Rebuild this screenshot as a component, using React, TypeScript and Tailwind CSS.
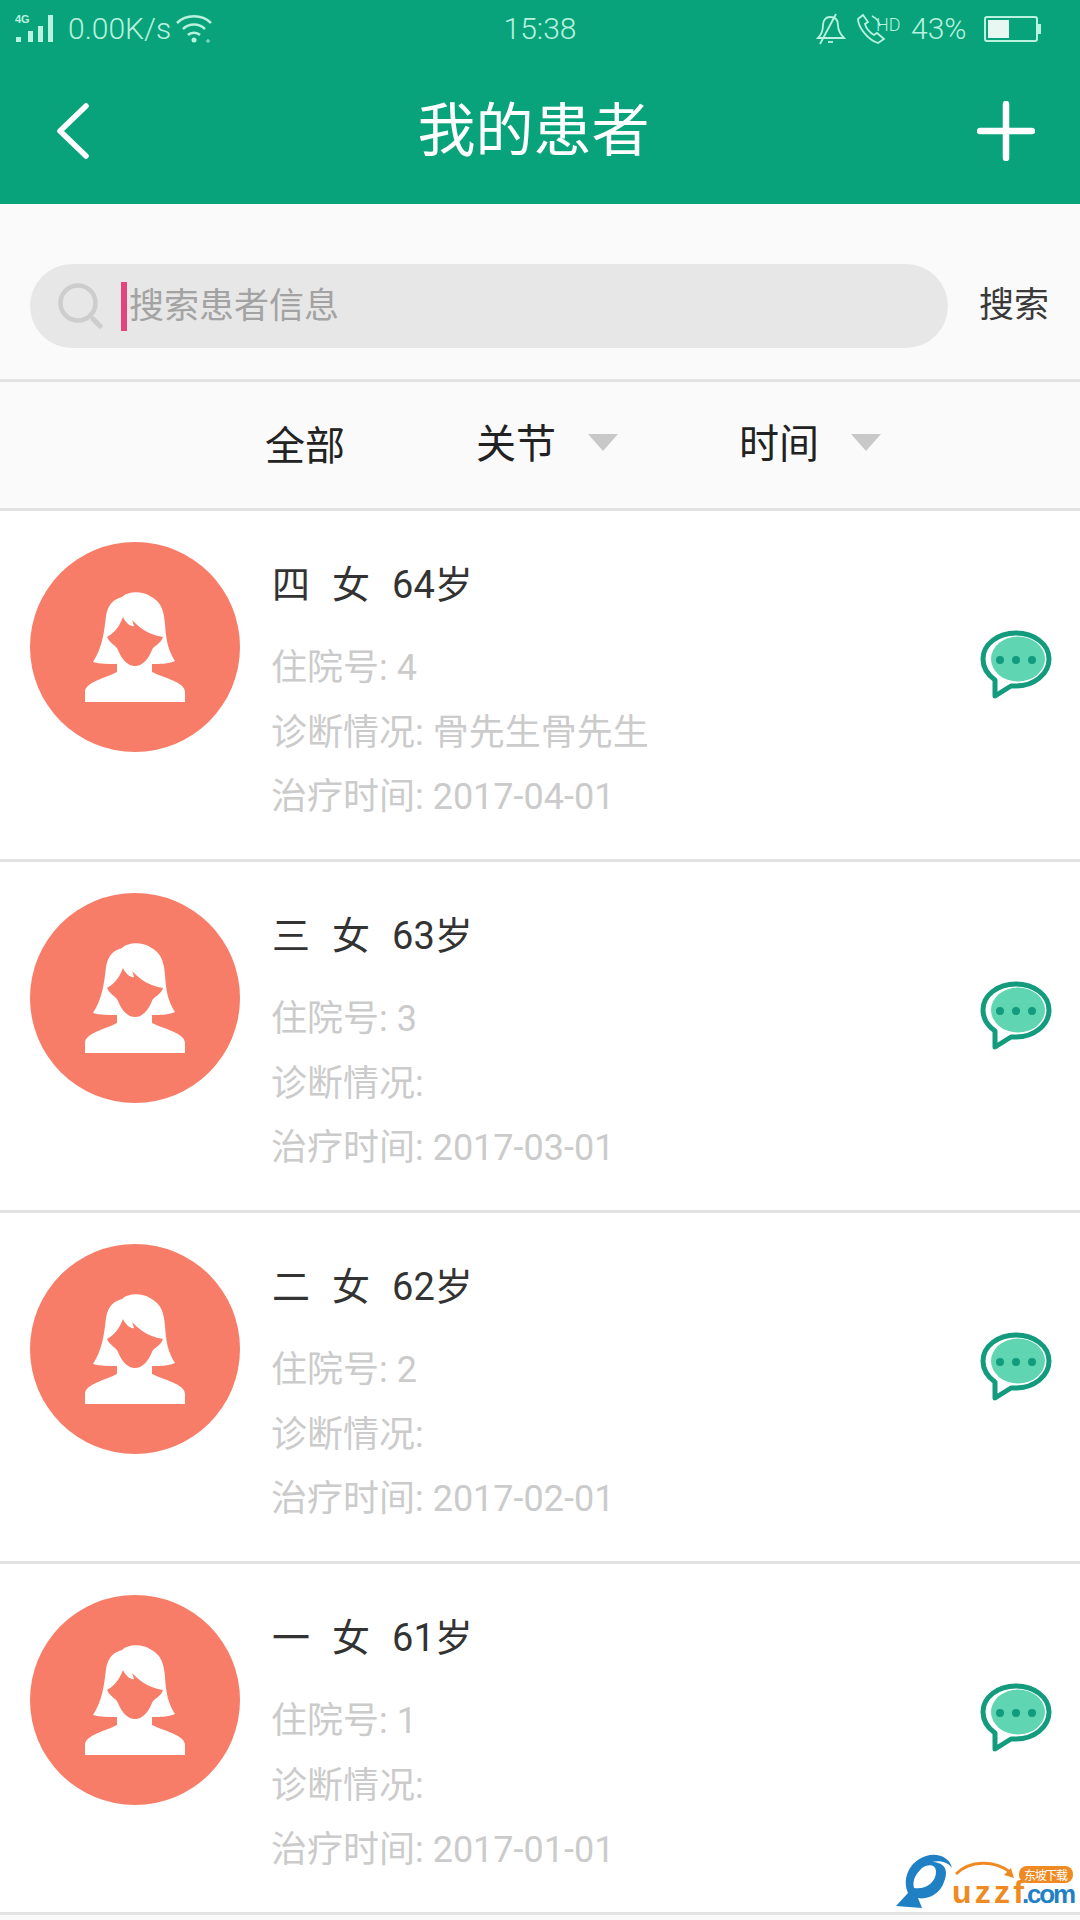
const cjk = "font-['Roboto','Noto_Sans_CJK_SC',sans-serif]";

const patients = [
	{ name: "四", age: "64岁", no: "4", diagnosis: "骨先生骨先生", date: "2017-04-01" },
	{ name: "三", age: "63岁", no: "3", diagnosis: "", date: "2017-03-01" },
	{ name: "二", age: "62岁", no: "2", diagnosis: "", date: "2017-02-01" },
	{ name: "一", age: "61岁", no: "1", diagnosis: "", date: "2017-01-01" },
];

const StatusBar = () => (
	<div className="flex h-[58px] items-center text-[#b9f2df] font-light">
		<div className="flex w-[400px] items-center pl-[15px]">
			<svg width="42" height="30" viewBox="0 0 42 30" className="shrink-0">
				<text x="0" y="9" fontSize="11" fontWeight="700" fontFamily="Liberation Sans" fill="#b9f2df">
					4G
				</text>
				<rect x="1" y="23" width="5" height="5" fill="#b9f2df" />
				<rect x="13" y="17" width="5" height="11" fill="#b9f2df" />
				<rect x="23" y="12" width="5" height="16" fill="#b9f2df" />
				<rect x="33" y="1" width="5" height="27" fill="#b9f2df" />
			</svg>
			<span className="ml-[11px] text-[30px] leading-none">0.00K/s</span>
			<svg width="37" height="30" viewBox="0 0 37 30" className="ml-[5px] shrink-0" fill="none" stroke="#b9f2df" strokeWidth="2.6">
				<path d="M1 9C10 0 26 0 35 9" />
				<path d="M7 15C13 9 23 9 29 15" />
				<path d="M12 21C15 18 21 18 24 21" />
				<circle cx="18" cy="26" r="2.5" fill="#b9f2df" stroke="none" />
				<circle cx="32" cy="27" r="1.2" strokeWidth="1" />
			</svg>
		</div>
		<div className="w-[280px] text-center text-[30px] leading-none">15:38</div>
		<div className="flex flex-1 items-center pl-[136px]">
			<svg width="30" height="32" viewBox="0 0 30 32" className="shrink-0" fill="none" stroke="#b9f2df" strokeWidth="1.8">
				<path d="M2 25C6 21 7 17 7 12C7 7 10 4 14 4C19 4 22 7 22 12C22 17 24 21 28 25Z" />
				<path d="M12 29H17" />
				<path d="M20 1L4 31" />
			</svg>
			<svg width="52" height="32" viewBox="0 0 52 32" className="ml-[10px] shrink-0" fill="none" stroke="#b9f2df" strokeWidth="1.8">
				<path d="M7 2L2 6C2 14 12 27 22 30L28 26L21 20L18 22C14 20 10 15 9 11L12 9Z" />
				<path d="M16 3C20 5 23 8 24 13" strokeWidth="1.4" />
				<text x="20" y="18" fontSize="18" fontFamily="Roboto" fill="#b9f2df" stroke="none">
					HD
				</text>
			</svg>
			<span className="ml-[3px] text-[30px] leading-none">43%</span>
			<div className="ml-[18px] h-[26px] w-[54px] rounded-[3px] border-2 border-[#b9f2df] p-[2px]">
				<div className="h-full w-[21px] bg-[#e9f7f2]" />
			</div>
			<div className="h-[10px] w-[3px] bg-[#b9f2df]" />
		</div>
	</div>
);

const NavBar = () => (
	<div className="flex h-[146px] items-center justify-between pl-[56px] pr-[45px]">
		<svg width="34" height="56" viewBox="0 0 34 56" fill="none" stroke="#fff" strokeWidth="5.5" strokeLinecap="round" strokeLinejoin="round">
			<path d="M30 3L4 28L30 53" />
		</svg>
		<h1 className="text-[58px] leading-none font-normal text-white">我的患者</h1>
		<svg width="58" height="60" viewBox="0 0 58 60" fill="none" stroke="#fff" strokeWidth="6.5" strokeLinecap="round">
			<path d="M29 3V57" />
			<path d="M3 30H55" />
		</svg>
	</div>
);

const SearchBar = () => (
	<div className="flex h-[175px] items-start px-[30px] pt-[60px]">
		<div className="flex h-[84px] w-[918px] items-center rounded-full bg-[#e8e7e7] pl-[28px]">
			<svg width="46" height="46" viewBox="0 0 46 46" className="shrink-0" fill="none" stroke="#cdcdcd">
				<circle cx="20" cy="20" r="17.5" strokeWidth="4.5" />
				<path d="M35 36L42 43" strokeWidth="5" strokeLinecap="round" />
			</svg>
			<div className="ml-[17px] h-[49px] w-[6px] shrink-0 bg-[#e2457e]" />
			<span className="ml-[2px] text-[35px] leading-none text-[#a3a3a3]">搜索患者信息</span>
		</div>
		<span className="mt-[24px] ml-[31px] text-[35px] leading-none text-[#3a3a3a]">搜索</span>
	</div>
);

const Caret = () => <div className="h-0 w-0 border-x-[15px] border-t-[17px] border-x-transparent border-t-[#c8c8c8]" />;

const FilterBar = () => (
	<div className="flex h-[126px] items-center border-t-[3px] border-[#e2e2e2] box-content pl-[265px] text-[40px] leading-none text-[#222]">
		<span className="mt-[4px]">全部</span>
		<span className="ml-[131px]">关节</span>
		<div className="ml-[32px] mb-[6px]">
			<Caret />
		</div>
		<span className="ml-[121px]">时间</span>
		<div className="ml-[32px] mb-[6px]">
			<Caret />
		</div>
	</div>
);

const Avatar = () => (
	<div className="h-[210px] w-[210px] shrink-0 rounded-full bg-[#f77d68]">
		<svg width="210" height="210" viewBox="0 0 210 210">
			<path
				fill="#fff"
				d="M63 120C72 106 74 92 76 74C78 62 84 57 92 55C98 49 112 49 120 54C132 60 134 70 135 82C136 98 138 108 145 119C138 122 130 122 122 122V130C134 136 155 140 155 150V160H55V150C55 140 76 136 87 130V122C78 122 70 122 63 120Z"
			/>
			<path
				fill="#f77d68"
				d="M77 95C82 92 88 88 93 75C96 82 102 85 104 84C103 81 103 80 102 78C108 84 116 92 133 95C130 103 124 103 122 108C118 118 112 124 105 124C98 124 92 118 88 108C86 103 80 102 77 95Z"
			/>
		</svg>
	</div>
);

const ChatIcon = () => (
	<svg width="72" height="70" viewBox="0 0 72 70" className="shrink-0">
		<path
			d="M36 3C18 3 3 14 3 29C3 38 8 45 15 50L15 66L31 56C33 56 34 56 36 56C54 56 69 44 69 29C69 14 54 3 36 3Z"
			fill="#fff"
			stroke="#129b7c"
			strokeWidth="5"
			strokeLinejoin="round"
		/>
		<ellipse cx="38" cy="29" rx="27" ry="22.5" fill="#5fd6b1" />
		<circle cx="20" cy="30" r="4" fill="#129b7c" />
		<circle cx="36" cy="30" r="4" fill="#129b7c" />
		<circle cx="52" cy="30" r="4" fill="#129b7c" />
	</svg>
);

type Patient = (typeof patients)[number];

const PatientRow = ({ patient }: { patient: Patient }) => (
	<div className="flex h-[351px] border-b-[3px] border-[#e3e3e3] bg-white pl-[30px] pr-[28px] pt-[31px]">
		<Avatar />
		<div className="ml-[31px] flex flex-col">
			<div className="mt-[12px] flex h-[62px] items-center gap-[22px] text-[38px] leading-none text-[#333]">
				<span className="ml-[1px]">{patient.name}</span>
				<span>女</span>
				<span>{patient.age}</span>
			</div>
			<div className="mt-[20px] text-[36px] leading-[64.5px] text-[#cbcbcb]">
				<div>住院号: {patient.no}</div>
				<div>诊断情况: {patient.diagnosis}</div>
				<div>治疗时间: {patient.date}</div>
			</div>
		</div>
		<div className="ml-auto mt-[88px]">
			<ChatIcon />
		</div>
	</div>
);

// site badge pinned over the bottom right of the list
const SiteBadge = () => (
	<svg width="186" height="62" viewBox="0 0 186 62" className="absolute left-[894px] top-[1848px]">
		<path
			fill="#1f80c4"
			d="M2 58L14 45C8 32 14 14 32 8C44 4 56 10 58 20C54 14 46 12 38 14C48 14 56 20 50 34C46 46 34 52 24 50L28 60ZM20 40C32 42 42 34 42 24C42 16 34 16 28 20C22 26 18 32 20 40Z"
		/>
		<path d="M62 26C76 12 100 12 116 24" fill="none" stroke="#ef8a22" strokeWidth="3" />
		<path d="M120 30L110 27L117 20Z" fill="#ef8a22" />
		<text x="58" y="55" fontFamily="Liberation Sans" fontWeight="700" fontSize="32" fill="#ef8a22" textLength="72">
			uzzf
		</text>
		<text x="128" y="55" fontFamily="Liberation Sans" fontWeight="700" fontSize="26" fill="#1f80c4" textLength="54">
			.com
		</text>
		<rect x="125" y="18" width="54" height="17" rx="8" fill="#ef8a22" />
		<text x="130" y="32" fontFamily="Noto Sans CJK SC" fontSize="12" fill="#fff" textLength="44">
			东坡下载
		</text>
	</svg>
);

const App = () => {
	return (
		<div className={`relative h-[1920px] w-[1080px] overflow-hidden bg-[#fafafa] ${cjk}`}>
			<div className="bg-[#08a37b]">
				<StatusBar />
				<NavBar />
			</div>
			<SearchBar />
			<FilterBar />
			<div className="border-t-[3px] border-[#e2e2e2]">
				{patients.map((patient) => (
					<PatientRow key={patient.no} patient={patient} />
				))}
			</div>
			<SiteBadge />
		</div>
	);
};

export default App;
